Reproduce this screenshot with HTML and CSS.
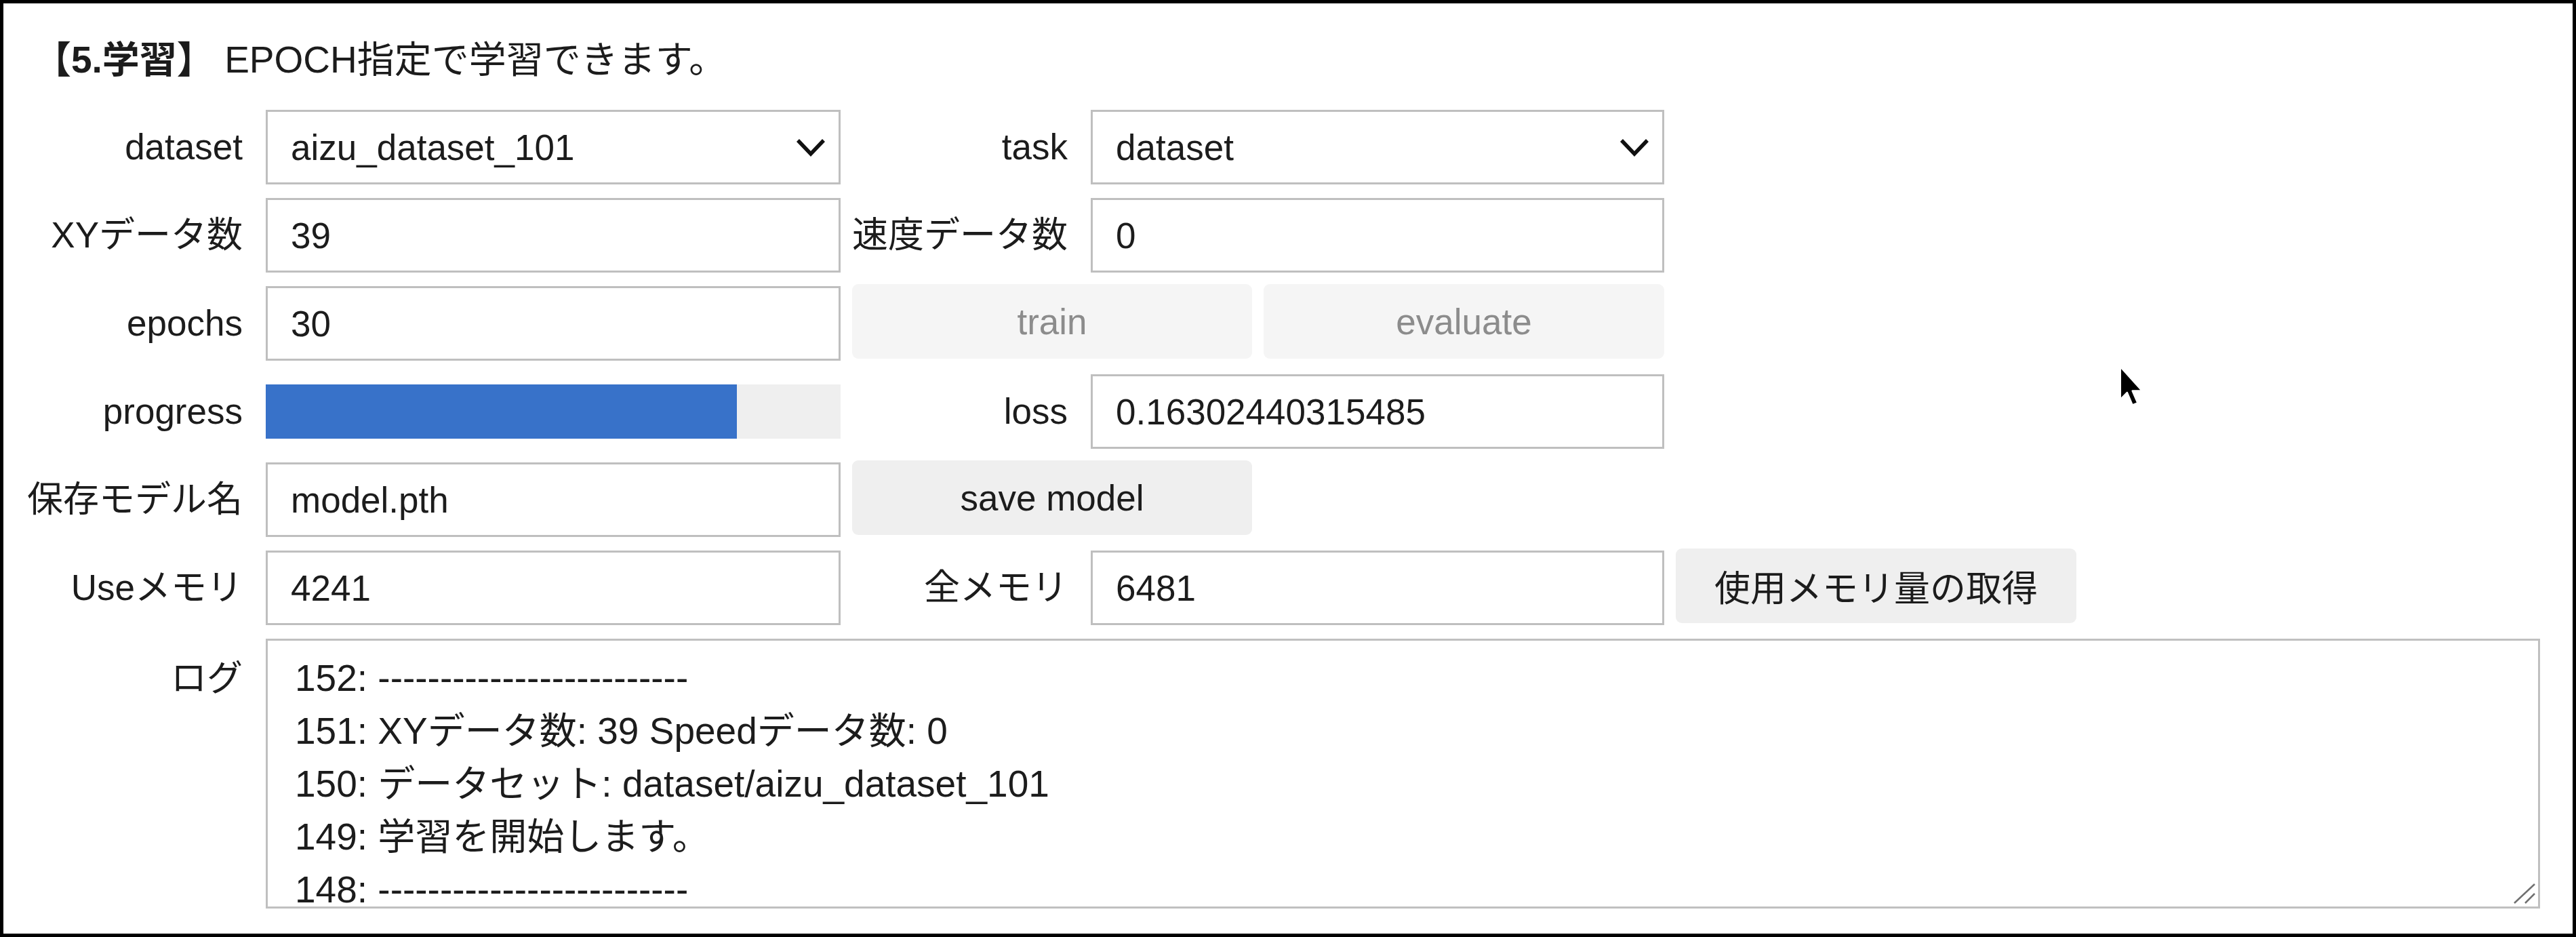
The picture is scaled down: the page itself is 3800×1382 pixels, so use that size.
FILE: index.html
```html
<!DOCTYPE html>
<html lang="ja">
<head>
<meta charset="utf-8">
<title>5.学習</title>
<link rel="stylesheet" href="styles.css">
</head>
<body>
<div class="frame">
  <p class="title"><b>【5.学習】</b> EPOCH指定で学習できます。</p>
  <div class="form">
    <label class="lbl">dataset</label>
    <div class="select-wrap">
      <select class="field"><option>aizu_dataset_101</option></select>
      <svg class="chev" viewBox="0 0 44 28" width="44" height="28"><polyline points="3,3 22,23 41,3" fill="none" stroke="#111" stroke-width="5.5" stroke-linejoin="miter"/></svg>
    </div>
    <div class="pair">
      <label class="lbl2">task</label>
      <div class="select-wrap w2">
        <select class="field"><option>dataset</option></select>
        <svg class="chev" viewBox="0 0 44 28" width="44" height="28"><polyline points="3,3 22,23 41,3" fill="none" stroke="#111" stroke-width="5.5" stroke-linejoin="miter"/></svg>
      </div>
    </div>

    <label class="lbl">XYデータ数</label>
    <input class="field" type="text" value="39">
    <div class="pair">
      <label class="lbl2">速度データ数</label>
      <input class="field w2" type="text" value="0">
    </div>

    <label class="lbl">epochs</label>
    <input class="field" type="text" value="30">
    <button class="btn" disabled>train</button>
    <button class="btn" disabled>evaluate</button>

    <label class="lbl">progress</label>
    <div class="progress"><div class="progress-fill" style="width: 82%"></div></div>
    <div class="pair">
      <label class="lbl2">loss</label>
      <input class="field w2" type="text" value="0.16302440315485">
    </div>

    <label class="lbl">保存モデル名</label>
    <input class="field" type="text" value="model.pth">
    <button class="btn">save model</button>

    <label class="lbl">Useメモリ</label>
    <input class="field" type="text" value="4241">
    <div class="pair">
      <label class="lbl2">全メモリ</label>
      <input class="field w2" type="text" value="6481">
    </div>
    <button class="btn">使用メモリ量の取得</button>

    <label class="lbl top">ログ</label>
    <div class="log-wrap">
      <textarea class="log" readonly>152: -------------------------
151: XYデータ数: 39 Speedデータ数: 0
150: データセット: dataset/aizu_dataset_101
149: 学習を開始します。
148: -------------------------</textarea>
      <svg class="grip" viewBox="0 0 32 30" width="32" height="30"><line x1="31" y1="1" x2="1" y2="29" stroke="#707070" stroke-width="2.5"/><line x1="31" y1="15" x2="17" y2="29" stroke="#707070" stroke-width="2.5"/></svg>
    </div>
  </div>
  <svg class="cursor" viewBox="0 0 32 52" width="38" height="62"><path d="M1.5 1.5 L1.5 42 L10 33.5 L16.5 49 L23 46.5 L16.5 31.5 L28.5 31.5 Z" fill="#000" stroke="#fff" stroke-width="2" stroke-linejoin="round"/></svg>
</div>
</body>
</html>
```

FILE: styles.css
```css
* {
  box-sizing: border-box;
}

html,
body {
  margin: 0;
  padding: 0;
  background: #fff;
}

body {
  font-family: "Liberation Sans", "Noto Sans CJK JP", sans-serif;
  color: #1c1c1c;
}

.frame {
  position: relative;
  width: 3800px;
  height: 1382px;
  border: 5px solid #000;
  padding: 53px 48px 0 45px;
  background: #fff;
}

.title {
  margin: 0 0 44px;
  font-size: 55px;
  line-height: 60px;
  white-space: nowrap;
}

.title b {
  font-weight: 700;
}

.form {
  display: grid;
  grid-template-columns: 325px 848px 590px 591px 591px 1fr;
  grid-template-rows: repeat(6, 110px) 398px;
  column-gap: 17px;
  row-gap: 20px;
  font-size: 53px;
}

.lbl {
  grid-column: 1;
  display: flex;
  align-items: center;
  justify-content: flex-end;
  padding-right: 17px;
  line-height: 60px;
  white-space: nowrap;
}

.lbl.top {
  align-items: flex-start;
  padding-top: 29px;
}

.pair {
  grid-column: span 2;
  display: flex;
  align-items: stretch;
}

.lbl2 {
  flex: 1;
  display: flex;
  align-items: center;
  justify-content: flex-end;
  padding-right: 34px;
  line-height: 60px;
  white-space: nowrap;
}

.field {
  display: block;
  width: 100%;
  height: 100%;
  margin: 0;
  padding: 0 34px;
  border: 3px solid #bfbfbf;
  border-radius: 0;
  background: #fff;
  font-family: "Liberation Sans", "Noto Sans CJK JP", sans-serif;
  font-size: 53px;
  color: #1c1c1c;
  outline: none;
  appearance: none;
  -webkit-appearance: none;
}

.w2 {
  width: 846px;
  flex: none;
}

.select-wrap {
  position: relative;
  height: 100%;
}

.select-wrap .field {
  padding-right: 90px;
}

.chev {
  position: absolute;
  right: 22px;
  top: 50%;
  margin-top: -13px;
  pointer-events: none;
}

.btn {
  height: 110px;
  margin: 0;
  border: 0;
  border-radius: 9px;
  background: #efefef;
  font-family: "Liberation Sans", "Noto Sans CJK JP", sans-serif;
  font-size: 53px;
  color: #1c1c1c;
  padding: 0;
  transform: translateY(-3px);
}

.btn:disabled {
  background: #f5f5f5;
  color: #8c8c8c;
}

.progress {
  align-self: center;
  height: 80px;
  background: #efefef;
}

.progress-fill {
  height: 100%;
  background: #3872c9;
}

.log-wrap {
  grid-column: 2 / -1;
  position: relative;
}

.log {
  display: block;
  width: 100%;
  height: 100%;
  margin: 0;
  padding: 16px 40px;
  border: 3px solid #c0c0c0;
  border-radius: 0;
  background: #fff;
  font-family: "Liberation Sans", "Noto Sans CJK JP", sans-serif;
  font-size: 55px;
  line-height: 78px;
  color: #1c1c1c;
  resize: none;
  overflow: hidden;
  outline: none;
  white-space: pre;
}

.grip {
  position: absolute;
  right: 7px;
  bottom: 7px;
  pointer-events: none;
}

.cursor {
  position: absolute;
  left: 3121px;
  top: 534px;
  pointer-events: none;
}
```
